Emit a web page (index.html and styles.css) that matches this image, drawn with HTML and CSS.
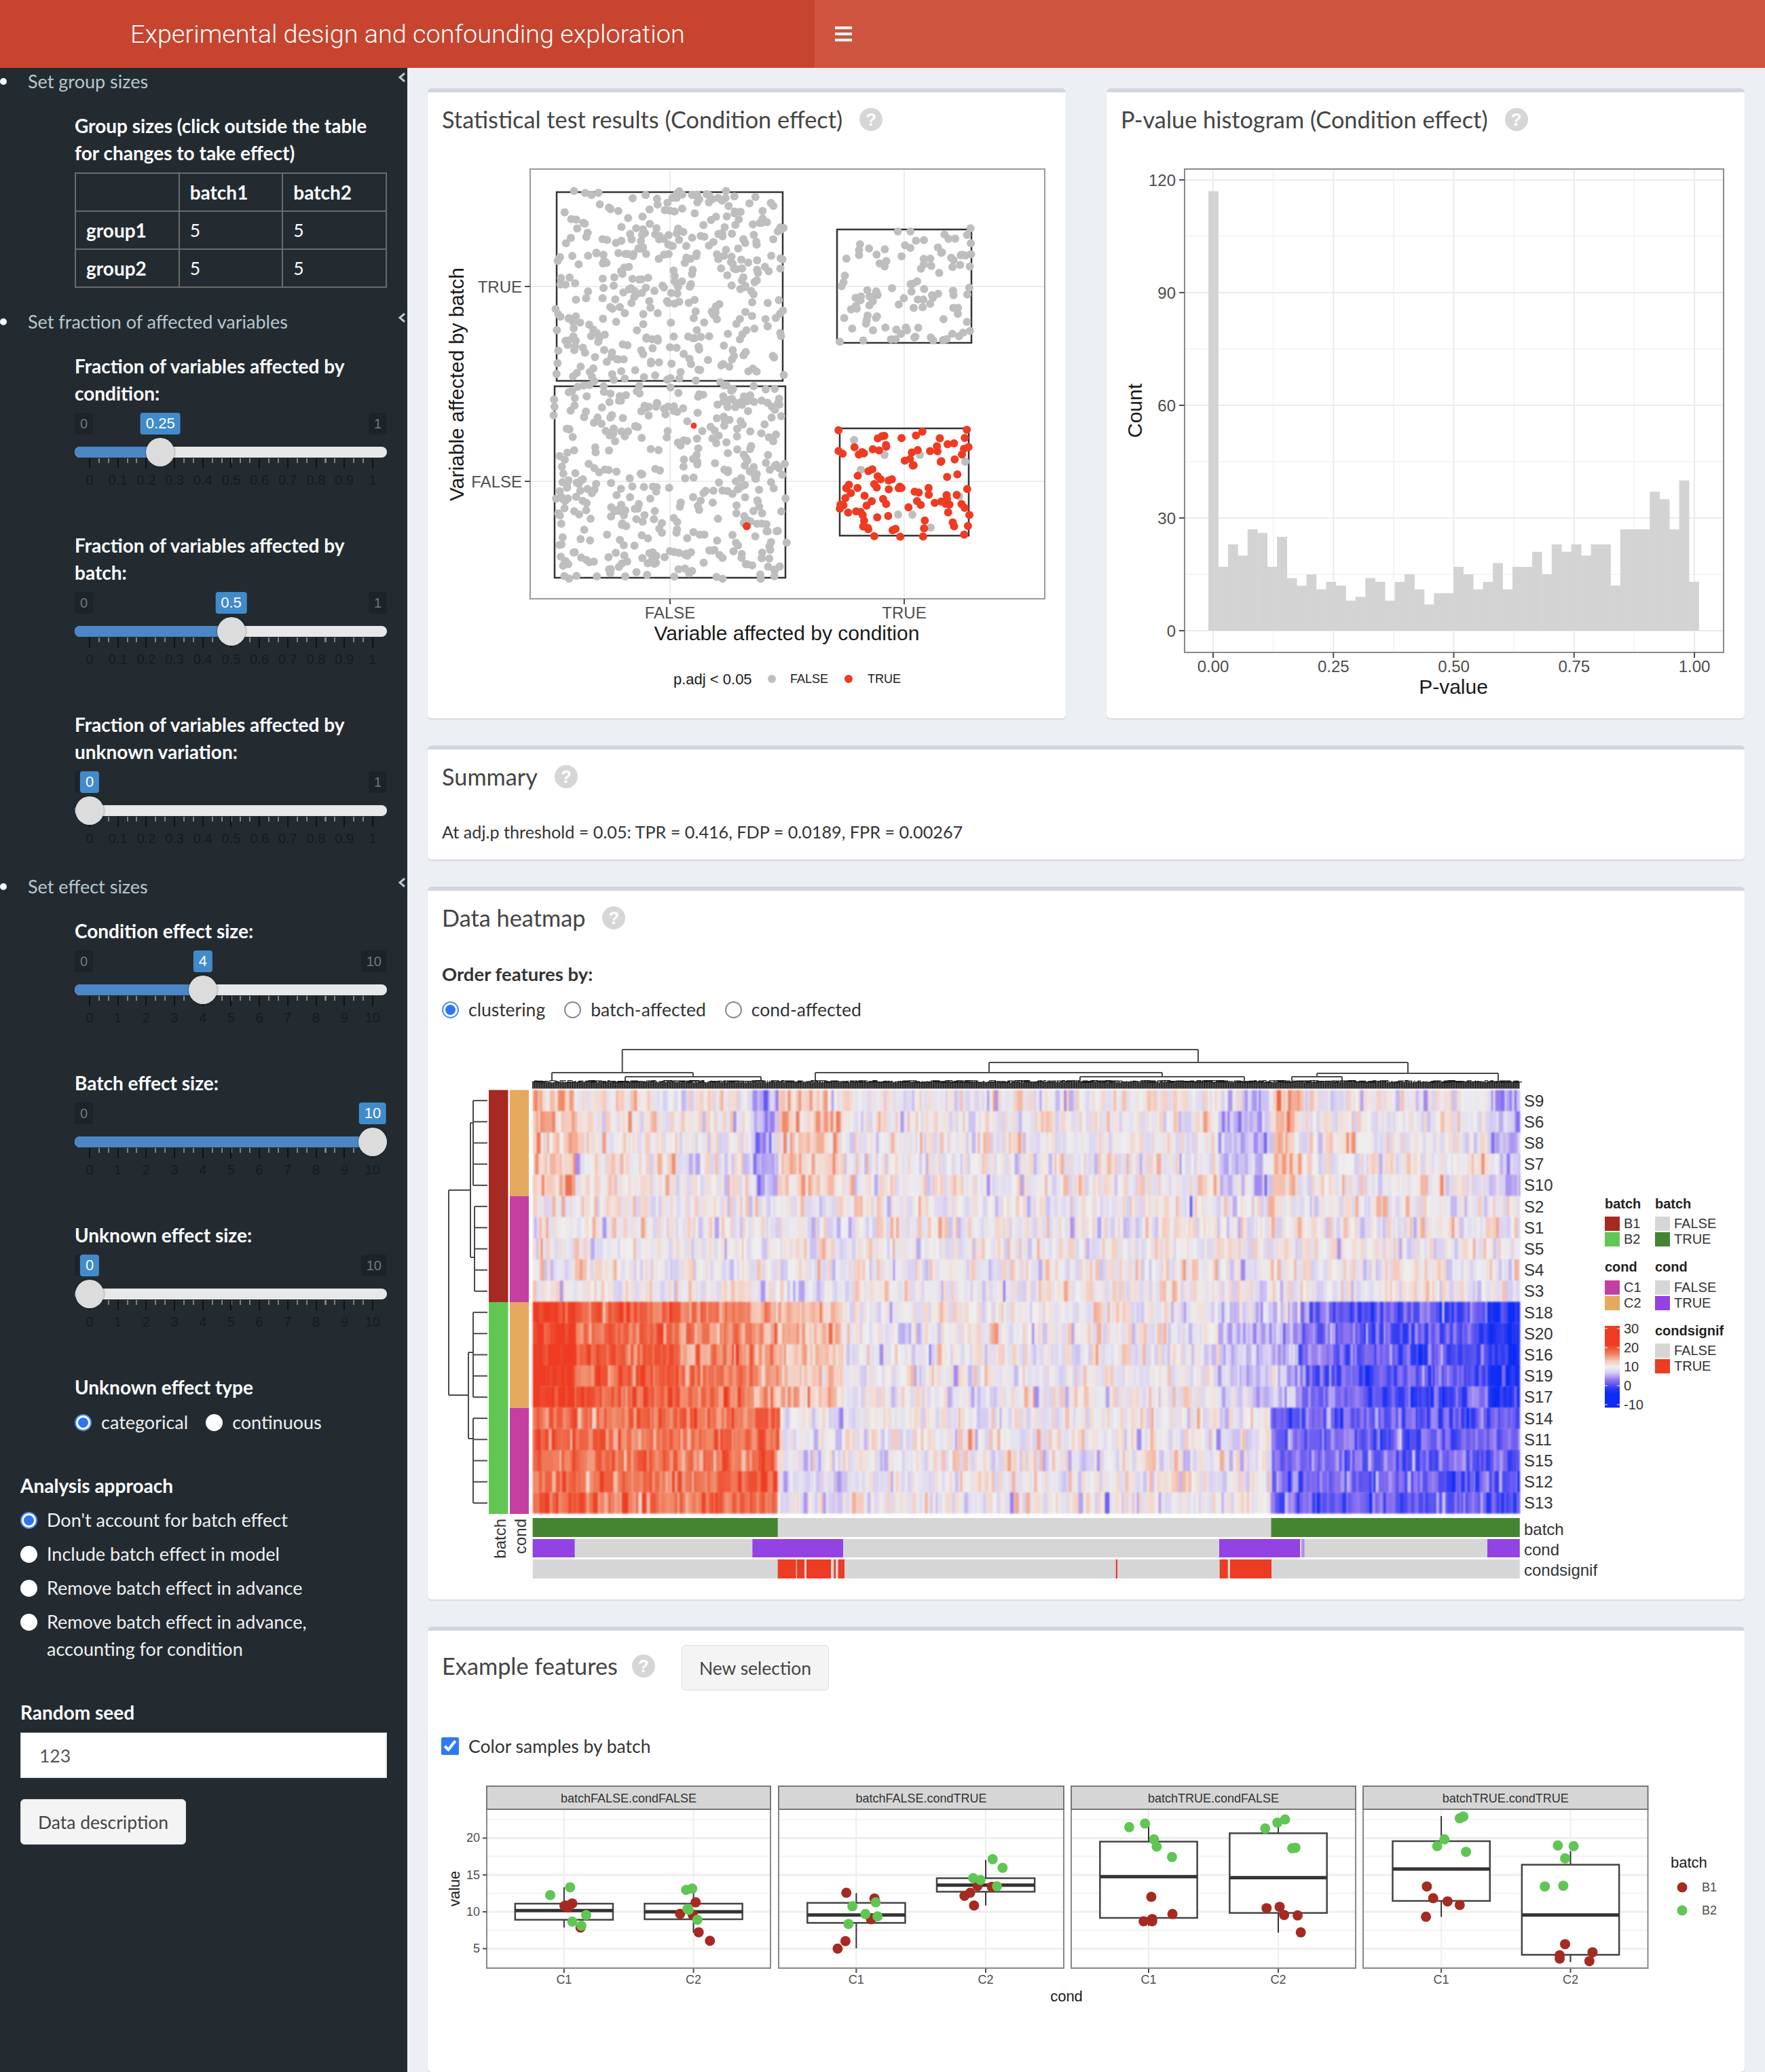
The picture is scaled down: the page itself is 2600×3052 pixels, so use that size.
FILE: index.html
```html
<!DOCTYPE html>
<html lang="en">
	<head>
		<meta charset="UTF-8">
		<title>Experimental design and confounding exploration</title>
		<link rel="stylesheet" href="styles.css">
	</head>
	<body>
		<header class="topbar">
			<div class="logo">Experimental design and confounding exploration</div>
			<div class="navbar">
				<button class="toggle"><span></span><span></span><span></span></button>
			</div>
		</header>
		<div class="layout">
			<aside class="sidebar">
				<div class="menu-item"><i class="dot"></i>Set group sizes<svg class="chevron" viewBox="0 0 12 16"><path d="M10 2 L3 8 L10 14"/></svg></div>
				<div class="group">
					<label class="label">Group sizes (click outside the table for changes to take effect)</label>
					<table class="sizes">
						<tr><th></th><th>batch1</th><th>batch2</th></tr>
						<tr><th>group1</th><td>5</td><td>5</td></tr>
						<tr><th>group2</th><td>5</td><td>5</td></tr>
					</table>
				</div>
				<div class="menu-item next-menu"><i class="dot"></i>Set fraction of affected variables<svg class="chevron" viewBox="0 0 12 16"><path d="M10 2 L3 8 L10 14"/></svg></div>
				<div class="group">
					<label class="label">Fraction of variables affected by condition:</label>
					<div class="slider" data-max="1" data-value="0.25"></div>
					<label class="label">Fraction of variables affected by batch:</label>
					<div class="slider" data-max="1" data-value="0.5"></div>
					<label class="label">Fraction of variables affected by unknown variation:</label>
					<div class="slider last-slider" data-max="1" data-value="0"></div>
				</div>
				<div class="menu-item next-menu"><i class="dot"></i>Set effect sizes<svg class="chevron" viewBox="0 0 12 16"><path d="M10 2 L3 8 L10 14"/></svg></div>
				<div class="group">
					<label class="label">Condition effect size:</label>
					<div class="slider" data-max="10" data-value="4"></div>
					<label class="label">Batch effect size:</label>
					<div class="slider" data-max="10" data-value="10"></div>
					<label class="label">Unknown effect size:</label>
					<div class="slider" data-max="10" data-value="0"></div>
					<label class="label">Unknown effect type</label>
					<div class="radio-row">
						<label class="choice first-choice"><input type="radio" name="unknown" checked>categorical</label>
						<label class="choice"><input type="radio" name="unknown">continuous</label>
					</div>
				</div>
				<div class="analysis">
					<label class="label">Analysis approach</label>
					<label class="choice stacked"><input type="radio" name="approach" checked>Don't account for batch effect</label>
					<label class="choice stacked"><input type="radio" name="approach">Include batch effect in model</label>
					<label class="choice stacked"><input type="radio" name="approach">Remove batch effect in advance</label>
					<label class="choice stacked"><input type="radio" name="approach"><span class="wrapped">Remove batch effect in advance, accounting for condition</span></label>
					<label class="label seed-label">Random seed</label>
					<input class="seed" type="text" value="123">
					<button class="btn data-btn">Data description</button>
				</div>
			</aside>
			<main class="content">
				<div class="row">
					<section class="box">
						<div class="box-head"><h3>Statistical test results (Condition effect)</h3><span class="help">?</span></div>
						<svg id="scatter" class="plot" viewBox="630 216 940 842" width="940" height="842"></svg>
					</section>
					<section class="box">
						<div class="box-head"><h3>P-value histogram (Condition effect)</h3><span class="help">?</span></div>
						<svg id="histogram" class="plot" viewBox="1630 216 940 842" width="940" height="842"></svg>
					</section>
				</div>
				<section class="box">
					<div class="box-head"><h3>Summary</h3><span class="help">?</span></div>
					<p class="summary">At adj.p threshold = 0.05: TPR = 0.416, FDP = 0.0189, FPR = 0.00267</p>
				</section>
				<section class="box">
					<div class="box-head"><h3>Data heatmap</h3><span class="help">?</span></div>
					<div class="options">
						<div class="order-title">Order features by:</div>
						<div class="order">
							<label class="choice light"><input type="radio" name="order" checked>clustering</label>
							<label class="choice light"><input type="radio" name="order">batch-affected</label>
							<label class="choice light"><input type="radio" name="order">cond-affected</label>
						</div>
					</div>
					<svg id="heatmap" class="plot" viewBox="630 1516 1940 840" width="1940" height="840"></svg>
				</section>
				<section class="box last">
					<div class="example-head">
						<h3>Example features</h3><span class="help">?</span>
						<button class="btn new-btn">New selection</button>
					</div>
					<label class="check"><input type="checkbox" checked>Color samples by batch</label>
					<svg id="facets" class="plot" viewBox="630 2600 1940 400" width="1940" height="400"></svg>
				</section>
			</main>
		</div>
		<script src="plots.js"></script>
	</body>
</html>
```
FILE: styles.css
```css
html, body {
	margin: 0;
	background-color: #ecf0f5;
	font-family: "Lato", "Noto Sans", sans-serif;
	font-size: 26.5px;
	line-height: 40px;
	color: #333;
}
.topbar {
	display: flex;
	height: 100px;
}
.logo {
	width: 1200px;
	box-sizing: border-box;
	padding-left: 192px;
	background-color: #c7442f;
	color: #fff;
	font-family: "Roboto", sans-serif;
	font-weight: 300;
	font-size: 37.8px;
	line-height: 100px;
}
.navbar {
	flex: 1;
	background-color: #d05540;
	display: flex;
	align-items: center;
}
.toggle {
	display: flex;
	flex-direction: column;
	gap: 5px;
	margin-left: 30px;
	padding: 0;
	border: none;
	background: none;
}
.toggle span {
	display: block;
	width: 25px;
	height: 4px;
	background-color: #fff;
}
.layout {
	display: flex;
	min-height: 2952px;
}

/* sidebar */
.sidebar {
	width: 600px;
	flex-shrink: 0;
	background-color: #232b31;
	color: #fff;
}
.menu-item {
	position: relative;
	height: 40px;
	padding-left: 41px;
	font-size: 27px;
	color: #b8c7ce;
}
.next-menu {
	margin-top: 30px;
}
.dot {
	position: absolute;
	left: 0;
	top: 15px;
	width: 10px;
	height: 10px;
	border-radius: 50%;
	background-color: #fff;
}
.chevron {
	position: absolute;
	right: 2px;
	top: 6px;
	width: 12px;
	height: 16px;
	fill: none;
	stroke: #b8c7ce;
	stroke-width: 3;
}
.group {
	padding: 25px 30px 0 110px;
}
.label {
	display: block;
	font-size: 28px;
	font-weight: 700;
	color: #fff;
}
.sizes {
	margin-top: 9px;
	width: 460px;
	table-layout: fixed;
	border-collapse: collapse;
	border: 2px solid #6b6b6b;
}
.sizes th, .sizes td {
	border: 2px solid #6b6b6b;
	padding: 0 15px;
	height: 54px;
	text-align: left;
	color: #fff;
}
.sizes th {
	font-size: 28px;
}
.slider {
	position: relative;
	height: 120px;
	margin: 9px 0 55px;
}
.last-slider {
	margin-bottom: 0;
}
.rail {
	position: absolute;
	top: 0;
	bottom: 0;
	left: 22px;
	right: 21px;
}
.limit {
	position: absolute;
	top: 0;
	height: 32px;
	padding: 0 8px;
	border-radius: 4px;
	background-color: #1d2429;
	color: #777;
	font-family: "Liberation Sans", sans-serif;
	font-size: 20px;
	line-height: 32px;
}
.limit.min {
	left: 0;
}
.limit.max {
	right: 0;
}
.value {
	position: absolute;
	top: 0;
	height: 32px;
	padding: 0 8px;
	border-radius: 4px;
	background-color: #428bca;
	color: #fff;
	font-family: "Liberation Sans", sans-serif;
	font-size: 22px;
	line-height: 32px;
	transform: translateX(-50%);
}
.track {
	position: absolute;
	top: 50px;
	left: 0;
	right: 0;
	height: 16px;
	border-radius: 8px;
	background-color: #e8e8e8;
}
.fill {
	position: absolute;
	top: 50px;
	left: 0;
	height: 16px;
	border-radius: 8px 0 0 8px;
	background-color: #4b87c6;
}
.knob {
	position: absolute;
	top: 37px;
	width: 42px;
	height: 42px;
	border-radius: 50%;
	background-color: #dcdcdc;
	box-shadow: 0 0 3px rgba(0, 0, 0, 0.5);
	transform: translateX(-50%);
}
.ticks {
	position: absolute;
	top: 67px;
	left: -1px;
	right: -1px;
	height: 15px;
	background-image:
		repeating-linear-gradient(90deg, #0e1316 0 2px, transparent 2px 41.7px),
		repeating-linear-gradient(90deg, #7d8285 0 2px, transparent 2px 13.9px);
	background-size: 100% 100%, 100% 7px;
	background-repeat: no-repeat;
}
.tick-labels {
	position: absolute;
	top: 87px;
	left: 0;
	right: 0;
	display: flex;
	justify-content: space-between;
	font-family: "Liberation Sans", sans-serif;
	font-size: 20px;
	line-height: 24px;
	color: #151b1f;
}
.tick-labels span {
	width: 0;
	display: flex;
	justify-content: center;
}
.radio-row {
	display: flex;
	margin-top: 12px;
}
.choice {
	display: flex;
	align-items: flex-start;
	gap: 14px;
	font-size: 27px;
	color: #f0f0f0;
}
.first-choice {
	margin-right: 26px;
}
.wrapped {
	max-width: 420px;
}
input[type="radio"] {
	appearance: none;
	box-sizing: border-box;
	flex-shrink: 0;
	width: 25px;
	height: 25px;
	margin: 8px 0 0;
	border-radius: 50%;
	background-color: #fff;
}
input[type="radio"]:checked {
	width: 21px;
	height: 21px;
	margin: 10px 2px 2px;
	border: 3px solid #fff;
	background-color: #2f74f7;
	box-shadow: 0 0 0 2px #4a8df8;
}
.analysis {
	padding: 53px 30px 0;
}
.stacked {
	margin-top: 10px;
}
.analysis .label:first-child + .stacked {
	margin-top: 11px;
}
.seed-label {
	margin-top: 53px;
}
.seed {
	display: block;
	box-sizing: border-box;
	width: 540px;
	height: 67px;
	margin: 10px 0 31px;
	padding: 0 27px;
	border: 1px solid #d2d6de;
	background-color: #fff;
	color: #555;
	font: inherit;
}
.btn {
	height: 67px;
	padding: 0 25px;
	border: 1px solid #ddd;
	border-radius: 6px;
	background-color: #f4f4f4;
	color: #444;
	font: inherit;
}

/* content */
.content {
	flex: 1;
	display: flex;
	flex-direction: column;
	gap: 40px;
	padding: 30px 30px 0;
	min-width: 0;
}
.row {
	display: grid;
	grid-template-columns: 940px 940px;
	gap: 60px;
}
.box {
	border-top: 6px solid #d2d6de;
	border-radius: 6px;
	background-color: #fff;
	box-shadow: 0 2px 2px rgba(0, 0, 0, 0.1);
}
.last {
	flex: 1;
}
.box-head {
	display: flex;
	align-items: center;
	height: 80px;
	padding-left: 21px;
}
h3 {
	margin: 0;
	font-size: 34.3px;
	font-weight: 400;
	color: #444;
}
.help {
	display: flex;
	align-items: center;
	justify-content: center;
	width: 34px;
	height: 34px;
	margin-left: 25px;
	border-radius: 50%;
	background-color: #d6d6d6;
	color: #fff;
	font-family: "Liberation Sans", sans-serif;
	font-size: 26px;
	font-weight: 700;
}
.summary {
	margin: 21px 0 0;
	padding: 0 21px 21px;
	font-size: 25.2px;
}
.options {
	padding: 23px 21px 9px;
}
.order-title {
	font-size: 27.5px;
	font-weight: 700;
}
.order {
	display: flex;
	gap: 28px;
	margin-top: 12px;
}
.light {
	font-size: 26.5px;
	color: #333;
}
.light input[type="radio"] {
	border: 2px solid #8a8a8a;
}
.light input[type="radio"]:checked {
	border: 3px solid #fff;
}
.plot {
	display: block;
}
.example-head {
	display: flex;
	align-items: center;
	padding: 21px 0 0 21px;
}
.example-head h3, .example-head .help {
	margin-bottom: 6px;
}
.example-head .help {
	margin-left: 21px;
}
.new-btn {
	margin-left: 39px;
}
.check {
	display: flex;
	align-items: center;
	gap: 14px;
	margin: 62px 0 8px 20px;
}
.check input {
	width: 26px;
	height: 26px;
	margin: 0;
	accent-color: #2d7af6;
}

/* plot text */
.plot text {
	font-family: "Liberation Sans", sans-serif;
	dominant-baseline: central;
}
.plot .tick {
	font-size: 24px;
	fill: #4d4d4d;
}
.plot .axis {
	font-size: 30px;
	fill: #1a1a1a;
}
.plot .legend-title {
	font-size: 22px;
	fill: #1a1a1a;
}
.plot .legend-text {
	font-size: 18px;
	fill: #1a1a1a;
}
.plot .row-label {
	font-size: 24px;
	fill: #333;
}
.plot .key-head {
	font-size: 20px;
	font-weight: 700;
	fill: #222;
}
.plot .key-text {
	font-size: 20px;
	fill: #333;
}
.plot .strip {
	font-size: 18px;
	fill: #333;
}
.plot .small-tick {
	font-size: 18px;
	fill: #4d4d4d;
}
.plot .small-axis {
	font-size: 22px;
	fill: #1a1a1a;
}
.heat {
	filter: blur(1px);
}
```
FILE: plots.js
```js
// seeded random so the picture stays the same on every load
function makeRandom(seed) {
	return function () {
		seed = (seed + 0x6D2B79F5) | 0;
		let t = Math.imul(seed ^ (seed >>> 15), 1 | seed);
		t = (t + Math.imul(t ^ (t >>> 7), 61 | t)) ^ t;
		return ((t ^ (t >>> 14)) >>> 0) / 4294967296;
	};
}
const rand = makeRandom(123);

function gauss() {
	return Math.sqrt(-2 * Math.log(rand() + 1e-9)) * Math.cos(2 * Math.PI * rand());
}

function add(parent, name, attrs, content) {
	const node = document.createElementNS('http://www.w3.org/2000/svg', name);
	for (const key in attrs) node.setAttribute(key, attrs[key]);
	if (content !== undefined) node.textContent = content;
	parent.appendChild(node);
	return node;
}
function line(svg, x1, y1, x2, y2, color, width) {
	return add(svg, 'line', { x1, y1, x2, y2, stroke: color, 'stroke-width': width });
}
function rect(svg, x, y, w, h, fill, stroke, sw) {
	return add(svg, 'rect', { x, y, width: w, height: h, fill, stroke: stroke || 'none', 'stroke-width': sw || 0 });
}
function label(svg, x, y, text, cls, anchor) {
	return add(svg, 'text', { x, y, class: cls, 'text-anchor': anchor || 'start' }, text);
}
function dot(svg, x, y, r, fill) {
	return add(svg, 'circle', { cx: x, cy: y, r, fill });
}

/* ---------- sliders ---------- */
document.querySelectorAll('.slider').forEach(function (slider) {
	const max = Number(slider.dataset.max);
	const value = Number(slider.dataset.value);
	const pct = value / max * 100;
	const labels = [];
	for (let i = 0; i <= 10; i++) labels.push('<span>' + (max === 1 ? i / 10 : i) + '</span>');
	slider.innerHTML =
		'<div class="limit min">0</div><div class="limit max">' + max + '</div>' +
		'<div class="track"></div>' +
		'<div class="fill" style="width:calc(' + pct * 4.17 + 'px + 22px)"></div>' +
		'<div class="rail">' +
		'<div class="ticks"></div>' +
		'<div class="tick-labels">' + labels.join('') + '</div>' +
		'<div class="value" style="left:' + pct + '%">' + value + '</div>' +
		'<div class="knob" style="left:' + pct + '%"></div>' +
		'</div>';
});

/* ---------- scatter ---------- */
function drawScatter() {
	const svg = document.getElementById('scatter');
	const grey = '#bebebe', red = '#ee3b22';
	const size = 6;
	line(svg, 987, 249, 987, 882, '#ededed', 2);
	line(svg, 1332, 249, 1332, 882, '#ededed', 2);
	line(svg, 781, 422, 1539, 422, '#ededed', 2);
	line(svg, 781, 709, 1539, 709, '#ededed', 2);
	rect(svg, 781, 249, 758, 633, 'none', '#9a9a9a', 2);
	line(svg, 773, 422, 781, 422, '#4d4d4d', 2);
	line(svg, 773, 709, 781, 709, '#4d4d4d', 2);
	line(svg, 987, 882, 987, 890, '#4d4d4d', 2);
	line(svg, 1332, 882, 1332, 890, '#4d4d4d', 2);

	const boxes = [
		{ x0: 820, x1: 1153, y0: 283, y1: 561, n: 380 },
		{ x0: 1233, x1: 1431, y0: 338, y1: 505, n: 110 },
		{ x0: 817, x1: 1157, y0: 569, y1: 851, n: 400 },
		{ x0: 1237, x1: 1427, y0: 631, y1: 789, n: 0 }
	];
	boxes.forEach(function (b) {
		rect(svg, b.x0, b.y0, b.x1 - b.x0, b.y1 - b.y0, 'none', '#333', 2.5);
		for (let i = 0; i < b.n; i++) {
			const x = b.x0 - 2 + rand() * (b.x1 - b.x0 + 4);
			const y = b.y0 - 2 + rand() * (b.y1 - b.y0 + 4);
			dot(svg, x, y, size, grey);
		}
	});
	// significant points in the last box, plus the few that did not pass
	[[1258, 648], [1268, 692], [1303, 670], [1355, 670], [1422, 680], [1323, 758], [1344, 758], [1371, 777], [1413, 731]].forEach(function (p) {
		dot(svg, p[0], p[1], size, grey);
	});
	const b = boxes[3];
	for (let i = 0; i < 105; i++) {
		dot(svg, b.x0 - 2 + rand() * (b.x1 - b.x0 + 4), b.y0 - 2 + rand() * (b.y1 - b.y0 + 4), size, red);
	}
	dot(svg, 1022, 627, 4.5, red);
	dot(svg, 1100, 775, size, red);

	label(svg, 769, 422, 'TRUE', 'tick', 'end');
	label(svg, 769, 709, 'FALSE', 'tick', 'end');
	label(svg, 987, 902, 'FALSE', 'tick', 'middle');
	label(svg, 1332, 902, 'TRUE', 'tick', 'middle');
	label(svg, 1159, 932, 'Variable affected by condition', 'axis', 'middle');
	add(svg, 'text', { x: 672, y: 566, class: 'axis', 'text-anchor': 'middle', transform: 'rotate(-90 672 566)' }, 'Variable affected by batch');
	label(svg, 992, 1000, 'p.adj < 0.05', 'legend-title');
	dot(svg, 1137, 1000, size, grey);
	label(svg, 1164, 1000, 'FALSE', 'legend-text');
	dot(svg, 1250, 1000, size, red);
	label(svg, 1278, 1000, 'TRUE', 'legend-text');
}

/* ---------- histogram ---------- */
function drawHistogram() {
	const svg = document.getElementById('histogram');
	const counts = [117, 17, 23, 20, 27, 26, 17, 25, 14, 12, 15, 11, 13, 12, 8, 9, 14, 13, 8, 13, 15, 11, 7, 10, 10,
		17, 15, 11, 13, 18, 11, 17, 17, 21, 15, 23, 21, 23, 20, 23, 23, 12, 27, 27, 27, 37, 35, 27, 40, 13];
	const yOf = function (v) { return 929 - v * 5.533; };
	const xOf = function (v) { return 1787 + v * 709; };
	for (let v = 15; v < 125; v += 30) line(svg, 1745, yOf(v), 2539, yOf(v), '#f3f3f3', 1.5);
	for (let v = 0.125; v < 1; v += 0.25) line(svg, xOf(v), 249, xOf(v), 961, '#f3f3f3', 1.5);
	for (let v = 0; v <= 120; v += 30) line(svg, 1745, yOf(v), 2539, yOf(v), '#ebebeb', 2);
	for (let v = 0; v <= 1; v += 0.25) line(svg, xOf(v), 249, xOf(v), 961, '#ebebeb', 2);
	const bin = 722.5 / 50;
	counts.forEach(function (c, i) {
		rect(svg, 1780 + i * bin, yOf(c), bin + 0.4, c * 5.533, '#d3d3d3');
	});
	rect(svg, 1745, 249, 794, 712, 'none', '#8a8a8a', 2);
	for (let v = 0; v <= 120; v += 30) {
		line(svg, 1737, yOf(v), 1745, yOf(v), '#4d4d4d', 2);
		label(svg, 1732, yOf(v), String(v), 'tick', 'end');
	}
	for (let v = 0; v <= 1; v += 0.25) {
		line(svg, xOf(v), 961, xOf(v), 969, '#4d4d4d', 2);
		label(svg, xOf(v), 981, v.toFixed(2), 'tick', 'middle');
	}
	label(svg, 2141, 1011, 'P-value', 'axis', 'middle');
	add(svg, 'text', { x: 1671, y: 605, class: 'axis', 'text-anchor': 'middle', transform: 'rotate(-90 1671 605)' }, 'Count');
}

/* ---------- heatmap ---------- */
const heatStops = [
	[-3, [10, 44, 245]], [0, [50, 60, 242]], [4, [143, 116, 240]], [8, [214, 205, 242]], [11, [238, 238, 238]],
	[14, [246, 203, 189]], [17, [240, 144, 112]], [20, [238, 96, 64]], [23, [238, 59, 34]]
];
function heatColor(v) {
	v = Math.max(-3, Math.min(23, Math.round(v * 2) / 2));
	for (let i = 1; i < heatStops.length; i++) {
		if (v <= heatStops[i][0]) {
			const a = heatStops[i - 1], b = heatStops[i];
			const t = (v - a[0]) / (b[0] - a[0]);
			const c = a[1].map(function (n, k) { return Math.round(n + (b[1][k] - n) * t); });
			return 'rgb(' + c.join(',') + ')';
		}
	}
	return 'rgb(238,59,34)';
}
// shift from neutral per feature block, for the four sample groups
const heatRegions = [
	{ end: 847, shift: [3.5, 0, 12.5, 8.5] },
	{ end: 1000, shift: [0.5, 0, 8.5, 7.5] },
	{ end: 1108, shift: [0, 0, 7, 7.5] },
	{ end: 1146, shift: [-5, 0, 5, 8.5] },
	{ end: 1242, shift: [3, -0.5, 3.5, -1] },
	{ end: 1796, shift: [0, 0, 0, 0] },
	{ end: 1873, shift: [-3, 0, -3, -0.5] },
	{ end: 1915, shift: [3.5, 1, -4, -8] },
	{ end: 2000, shift: [0, 0, -7, -8] },
	{ end: 2191, shift: [0, 0, -9, -8.5] },
	{ end: 2240, shift: [-3.5, 0, -12, -9] }
];
function drawHeatmap() {
	const svg = document.getElementById('heatmap');
	const left = 784.7, right = 2238.7, top = 1605.5, rowH = 31.2;
	const names = ['S9', 'S6', 'S8', 'S7', 'S10', 'S2', 'S1', 'S5', 'S4', 'S3', 'S18', 'S20', 'S16', 'S19', 'S17', 'S14', 'S11', 'S15', 'S12', 'S13'];
	const paths = {};
	for (let r = 0; r < 20; r++) {
		const group = Math.floor(r / 5);
		const y = top + r * rowH;
		let x = left;
		while (x < right) {
			const w = Math.min(2 + Math.floor(rand() * 5), right - x);
			const region = heatRegions.find(function (g) { return x + w / 2 < g.end; }) || heatRegions[10];
			const v = 11 + region.shift[group] + gauss() * 2.1;
			const color = heatColor(v);
			paths[color] = (paths[color] || '') + 'M' + x.toFixed(1) + ' ' + y.toFixed(1) + 'h' + (w + 0.6).toFixed(1) + 'v' + rowH + 'h-' + (w + 0.6).toFixed(1) + 'z';
			x += w;
		}
		label(svg, 2245, y + rowH / 2, names[r], 'row-label');
	}
	const heat = add(svg, 'g', { class: 'heat' });
	for (const color in paths) add(heat, 'path', { d: paths[color], fill: color });

	// sample annotation columns
	const brown = '#a52a22', green = '#62c655', orange = '#e5a95f', magenta = '#c440a0';
	rect(svg, 720, 1605.5, 28.5, 312.5, brown);
	rect(svg, 720, 1918, 28.5, 312, green);
	rect(svg, 751, 1605.5, 28, 156.5, orange);
	rect(svg, 751, 1762, 28, 156, magenta);
	rect(svg, 751, 1918, 28, 156, orange);
	rect(svg, 751, 2074, 28, 156, magenta);

	// feature annotation rows
	const grey = '#d6d6d6', dark = '#458532', purple = '#9342e3', red = '#ec3c24';
	rect(svg, left, 2236, right - left, 28, grey);
	rect(svg, left, 2236, 1145.7 - left, 28, dark);
	rect(svg, 1872.5, 2236, right - 1872.5, 28, dark);
	rect(svg, left, 2267, right - left, 27, grey);
	[[left, 846.6], [1108.4, 1242], [1796, 1915], [2191, right]].forEach(function (s) {
		rect(svg, s[0], 2267, s[1] - s[0], 27, purple);
	});
	rect(svg, 1917.4, 2267, 4.2, 27, '#b48bea');
	rect(svg, left, 2297, right - left, 28, grey);
	[[1145.7, 1172.7], [1174, 1185], [1188, 1224], [1228.4, 1231], [1234.7, 1244], [1643.8, 1646], [1796.7, 1808.7], [1812, 1873]].forEach(function (s) {
		rect(svg, s[0], 2297, s[1] - s[0], 28, red);
	});
	label(svg, 2245, 2252, 'batch', 'row-label');
	label(svg, 2245, 2282, 'cond', 'row-label');
	label(svg, 2245, 2312, 'condsignif', 'row-label');
	add(svg, 'text', { x: 736, y: 2237, class: 'row-label', 'text-anchor': 'end', transform: 'rotate(-90 736 2237)' }, 'batch');
	add(svg, 'text', { x: 766, y: 2237, class: 'row-label', 'text-anchor': 'end', transform: 'rotate(-90 766 2237)' }, 'cond');

	// row dendrogram
	const rowY = function (i) { return top + (i + 0.5) * rowH; };
	const dk = '#4a4a4a';
	line(svg, 661, 1753, 661, 2055, dk, 2);
	line(svg, 661, 1753, 693, 1753, dk, 2);
	line(svg, 661, 2055, 690, 2055, dk, 2);
	line(svg, 693, 1654, 693, 1852, dk, 2);
	line(svg, 690, 1992, 690, 2119, dk, 2);
	[[0, 697, 693], [5, 699, 693], [10, 697, 690], [15, 697, 690]].forEach(function (g) {
		line(svg, g[1], rowY(g[0]), g[1], rowY(g[0] + 4), dk, 2);
		for (let i = 0; i < 5; i++) line(svg, g[1], rowY(g[0] + i), 718, rowY(g[0] + i), dk, 2);
	});
	[[693, 1654, 697], [693, 1852, 699], [690, 1992, 697], [690, 2119, 697]].forEach(function (s) {
		line(svg, s[0], s[1], s[2], s[1], dk, 2);
	});

	// column dendrogram
	[[916.7, 1765, 1546], [1457, 2074, 1565], [813, 1021, 1580], [1201, 1712, 1580], [1940, 2207, 1581], [921, 1121, 1586], [1591, 1833, 1586], [1903, 1977, 1586]].forEach(function (s) {
		line(svg, s[0], s[2], s[1], s[2], dk, 2);
	});
	[[916.7, 1546, 1580], [1765, 1546, 1565], [1457, 1565, 1580], [2074, 1565, 1581], [813, 1580, 1592], [1021, 1580, 1586],
		[921, 1586, 1592], [1121, 1586, 1592], [1201, 1580, 1592], [1712, 1580, 1586], [1591, 1586, 1592], [1833, 1586, 1592],
		[1940, 1581, 1586], [2207, 1581, 1592], [1903, 1586, 1592], [1977, 1586, 1592]].forEach(function (s) {
		line(svg, s[0], s[1], s[0], s[2], dk, 2);
	});
	let leaves = '';
	for (let x = left; x < right; x += 1.4) {
		const h = 1591.5 + rand() * 3;
		leaves += 'M' + x.toFixed(1) + ' 1603.5V' + h.toFixed(1);
		if (rand() < 0.4) leaves += 'h' + (3 + rand() * 10).toFixed(1);
	}
	add(svg, 'path', { d: leaves, stroke: '#1a1a1a', 'stroke-width': 1.2, fill: 'none' });

	// legends
	function swatch(x, y, text, color) {
		rect(svg, x, y, 22, 21, color);
		label(svg, x + 28, y + 10, text, 'key-text');
	}
	label(svg, 2364, 1773, 'batch', 'key-head');
	label(svg, 2438, 1773, 'batch', 'key-head');
	swatch(2364, 1792, 'B1', brown);
	swatch(2364, 1815, 'B2', green);
	swatch(2438, 1792, 'FALSE', grey);
	swatch(2438, 1815, 'TRUE', dark);
	label(svg, 2364, 1866, 'cond', 'key-head');
	label(svg, 2438, 1866, 'cond', 'key-head');
	swatch(2364, 1886, 'C1', magenta);
	swatch(2364, 1909, 'C2', orange);
	swatch(2438, 1886, 'FALSE', grey);
	swatch(2438, 1909, 'TRUE', purple);
	label(svg, 2438, 1960, 'condsignif', 'key-head');
	swatch(2438, 1979, 'FALSE', grey);
	swatch(2438, 2002, 'TRUE', red);
	for (let y = 1953; y < 2073; y++) {
		rect(svg, 2364, y, 22, 1.4, heatColor(11 + (2013 - y) / 2.8));
	}
	[[30, 1957], [20, 1985], [10, 2013], [0, 2041], [-10, 2069]].forEach(function (t) {
		line(svg, 2364, t[1], 2368, t[1], '#fff', 1);
		line(svg, 2382, t[1], 2386, t[1], '#fff', 1);
		label(svg, 2392, t[1], String(t[0]), 'key-text');
	});
}

/* ---------- example features ---------- */
const red2 = '#a52a22', green2 = '#5fc653';
function cropA(x, y) { return [630 + x / 1.568, 2380 + y / 2.613]; }
function cropB(x, y) { return [1560 + x / 1.5077, 2580 + y / 3]; }
const facets = [
	{ title: 'batchFALSE.condFALSE', x0: 717, x1: 1135, crop: cropA, groups: [
		{ x: 315, w: 113, box: [1108, 1170], med: 1135, wh: [1045, 1200],
			g: [[283, 1075], [329, 1045], [366, 1152], [334, 1177], [355, 1193]],
			r: [[316, 1117], [334, 1107], [325, 1122], [353, 1200], [320, 1115]] },
		{ x: 614, w: 113, box: [1108, 1168], med: 1139, wh: [1040, 1220],
			g: [[597, 1055], [611, 1050], [603, 1132], [600, 1128], [623, 1170]],
			r: [[619, 1103], [583, 1147], [612, 1150], [626, 1218], [652, 1251]] }
	] },
	{ title: 'batchFALSE.condTRUE', x0: 1147, x1: 1567, crop: cropA, groups: [
		{ x: 990, w: 113, box: [1105, 1182], med: 1152, wh: [1067, 1280],
			g: [[981, 1118], [1035, 1103], [1011, 1148], [1039, 1157], [972, 1186]],
			r: [[967, 1066], [1032, 1088], [1024, 1168], [965, 1252], [947, 1281]] },
		{ x: 1289, w: 113, box: [1010, 1062], med: 1037, wh: [940, 1115],
			r: [[1240, 1078], [1253, 1066], [1270, 1040], [1303, 1043], [1262, 1115]],
			g: [[1305, 937], [1328, 970], [1260, 1010], [1277, 1017], [1315, 1041]] }
	] },
	{ title: 'batchTRUE.condFALSE', x0: 1578, x1: 1997, crop: cropB, groups: [
		{ x: 199, w: 108, box: [398, 735], med: 553, wh: [320, 770],
			g: [[156, 334], [191, 318], [211, 388], [217, 420], [251, 466]],
			r: [[205, 642], [252, 718], [207, 740], [188, 750], [207, 750]] },
		{ x: 487, w: 108, box: [361, 713], med: 557, wh: [310, 800],
			g: [[458, 340], [485, 314], [502, 300], [518, 427], [525, 425]],
			r: [[461, 692], [490, 686], [500, 722], [530, 724], [537, 799]] }
	] },
	{ title: 'batchTRUE.condTRUE', x0: 2008, x1: 2427.5, crop: cropB, groups: [
		{ x: 849, w: 108, box: [396, 660], med: 519, wh: [285, 730],
			g: [[890, 295], [898, 287], [856, 388], [840, 418], [904, 443]],
			r: [[817, 596], [831, 648], [863, 662], [890, 678], [815, 730]] },
		{ x: 1136, w: 108, box: [500, 898], med: 722, wh: [440, 930],
			g: [[1108, 415], [1143, 418], [1124, 472], [1079, 596], [1120, 593]],
			r: [[1124, 851], [1112, 900], [1112, 915], [1185, 887], [1178, 926]] }
	] }
];
function drawFacets() {
	const svg = document.getElementById('facets');
	const top = 2665, bottom = 2899;
	const yOf = function (v) { return 2816 - (v - 10) * 10.86; };
	facets.forEach(function (f) {
		for (let v = 2.5; v < 23; v += 5) line(svg, f.x0, yOf(v), f.x1, yOf(v), '#f4f4f4', 2);
		for (let v = 5; v <= 20; v += 5) line(svg, f.x0, yOf(v), f.x1, yOf(v), '#eeeeee', 3);
		f.groups.forEach(function (g, i) {
			const cx = f.crop(g.x, 0)[0];
			line(svg, cx, top, cx, bottom, '#eeeeee', 2);
			line(svg, cx, bottom, cx, bottom + 7, '#4d4d4d', 2);
			label(svg, cx, 2916, 'C' + (i + 1), 'small-tick', 'middle');
		});
		f.groups.forEach(function (g) {
			const cx = f.crop(g.x, 0)[0];
			const halfW = g.w / 1.568 * (f.crop === cropA ? 1 : 1.04);
			const y = function (v) { return f.crop(0, v)[1]; };
			line(svg, cx, y(g.wh[0]), cx, y(g.wh[1]), '#333', 2);
			rect(svg, cx - halfW, y(g.box[0]), halfW * 2, y(g.box[1]) - y(g.box[0]), '#fff', '#444', 2.5);
			line(svg, cx - halfW, y(g.med), cx + halfW, y(g.med), '#333', 5);
			g.r.forEach(function (p) { const q = f.crop(p[0], p[1]); dot(svg, q[0], q[1], 7.5, red2); });
			g.g.forEach(function (p) { const q = f.crop(p[0], p[1]); dot(svg, q[0], q[1], 7.5, green2); });
		});
		rect(svg, f.x0, top, f.x1 - f.x0, bottom - top, 'none', '#888', 2);
		rect(svg, f.x0, 2631, f.x1 - f.x0, 34, '#d6d6d6', '#777', 2);
		label(svg, (f.x0 + f.x1) / 2, 2649, f.title, 'strip', 'middle');
	});
	for (let v = 5; v <= 20; v += 5) {
		line(svg, 711, yOf(v), 717, yOf(v), '#4d4d4d', 2);
		label(svg, 707, yOf(v), String(v), 'small-tick', 'end');
	}
	label(svg, 1571, 2940, 'cond', 'small-axis', 'middle');
	add(svg, 'text', { x: 669, y: 2782, class: 'small-axis', 'text-anchor': 'middle', transform: 'rotate(-90 669 2782)' }, 'value');
	label(svg, 2461, 2743, 'batch', 'small-axis');
	dot(svg, 2478, 2780, 7.5, red2);
	label(svg, 2507, 2780, 'B1', 'small-tick');
	dot(svg, 2478, 2814, 7.5, green2);
	label(svg, 2507, 2814, 'B2', 'small-tick');
}

drawScatter();
drawHistogram();
drawHeatmap();
drawFacets();
```
